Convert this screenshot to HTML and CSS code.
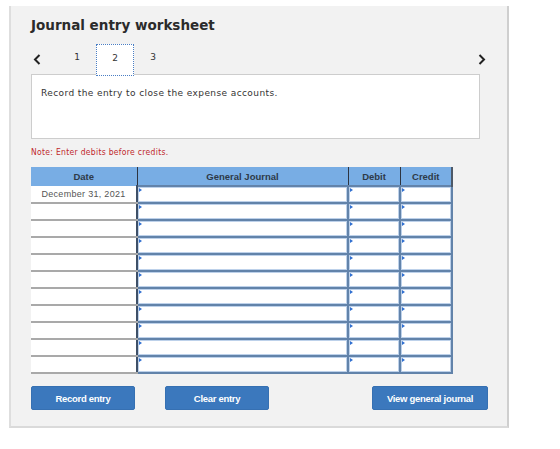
FILE: index.html
```html
<!DOCTYPE html>
<html>
<head>
    <meta charset="utf-8" />
    <title>Journal entry worksheet</title>
    <link rel="stylesheet" href="styles.css">
</head>
<body>

    <div class="panel">
        <h1 class="title">Journal entry worksheet</h1>

        <div class="nav">
            <span class="arrow">
                <svg width="8" height="11" viewBox="0 0 8 11"><path d="M6.5 1 L2 5.5 L6.5 10" fill="none" stroke="#222" stroke-width="2"/></svg>
            </span>
            <span class="tab">1</span>
            <span class="tab active">2</span>
            <span class="tab">3</span>
            <span class="arrow next">
                <svg width="8" height="11" viewBox="0 0 8 11"><path d="M1.5 1 L6 5.5 L1.5 10" fill="none" stroke="#222" stroke-width="2"/></svg>
            </span>
        </div>

        <div class="task">Record the entry to close the expense accounts.</div>

        <div class="note">Note: Enter debits before credits.</div>

        <table class="journal">
            <colgroup>
                <col class="c-date" />
                <col class="c-gj" />
                <col class="c-amt" />
                <col class="c-amt" />
            </colgroup>
            <thead>
                <tr>
                    <th>Date</th>
                    <th>General Journal</th>
                    <th>Debit</th>
                    <th>Credit</th>
                </tr>
            </thead>
            <tbody id="rows">
            </tbody>
        </table>

        <div class="buttons">
            <button class="btn">Record entry</button>
            <button class="btn clear">Clear entry</button>
            <button class="btn view">View general journal</button>
        </div>
    </div>

    <script>
        var rows = document.getElementById("rows");
        //11行空白分錄
        for (var i = 0; i < 11; i++) {
            var tr = document.createElement("tr");
            var d = document.createElement("td");
            d.className = "date";
            d.innerText = i == 0 ? "December 31, 2021" : "";
            tr.appendChild(d);
            for (var j = 0; j < 3; j++) {
                var td = document.createElement("td");
                td.className = "cell";
                tr.appendChild(td);
            }
            rows.appendChild(tr);
        }
    </script>
</body>
</html>
```

FILE: styles.css
```css
body {
    margin: 0;
    background-color: white;
}

.panel {
    margin: 6px 0 0 9px;
    width: 449px;
    height: 411px;
    padding: 9px 27px 0 20px;
    background-color: #f2f2f2;
    border-left: 2px solid #dedede;
    border-right: 2px solid #cfcfcf;
    border-bottom: 2px solid #dadada;
}

.title {
    margin: 0;
    font-family: "DejaVu Sans", Verdana, sans-serif;
    font-size: 13.5px;
    line-height: 20px;
    color: #2b2b2b;
}

.nav {
    display: flex;
    align-items: flex-start;
    margin: 9px -8px 0 0;
    height: 30px;
}

.arrow {
    width: 27px;
    padding: 7px 0 0 2px;
    box-sizing: border-box;
}
.arrow.next {
    margin-left: auto;
    width: 12px;
}

.tab {
    width: 38px;
    height: 32px;
    box-sizing: border-box;
    padding-top: 6px;
    line-height: 14px;
    text-align: center;
    font-family: "DejaVu Sans", Verdana, sans-serif;
    font-size: 9px;
    color: #333;
}
.tab.active {
    position: relative;
    z-index: 1;
    background-color: white;
    border: 1px dotted #4a7ec4;
}

.task {
    height: 39px;
    padding: 12px 9px;
    background-color: white;
    border: 1px solid #cdcdcd;
    font-family: "DejaVu Sans", Verdana, sans-serif;
    font-size: 9px;
    letter-spacing: 0.4px;
    line-height: 12px;
    color: #333;
}

.note {
    margin-top: 7px;
    font-family: "DejaVu Sans Condensed", Tahoma, sans-serif;
    font-size: 8.5px;
    letter-spacing: 0.3px;
    line-height: 12px;
    color: #c0282d;
}

.journal {
    margin-top: 9px;
    width: 421px;
    table-layout: fixed;
    border-collapse: collapse;
    font-family: "Liberation Sans", Arial, sans-serif;
    font-size: 9px;
}
.c-date { width: 106px; }
.c-gj { width: 211px; }
.c-amt { width: 52px; }

.journal th {
    height: 18px;
    padding: 0;
    background-color: #78ade4;
    color: #2e3a48;
    font-size: 9.5px;
    font-weight: bold;
    border-right: 1px solid #2d3440;
}
.journal th:last-child {
    border-right: 2px solid #4d5968;
}

.journal td {
    height: 15px;
    padding: 0;
}

.journal td.date {
    background-color: white;
    border-bottom: 2px solid #a9a9a9;
    text-align: center;
    color: #555;
    letter-spacing: 0.3px;
}

.journal td.cell {
    position: relative;
    background-color: white;
    border: 2px solid #6283aa;
    box-shadow: inset 0 0 0 1px #bdd1ea;
}
.journal td.cell:nth-child(2) {
    border-left-color: #3e5068;
}
.journal td.cell::before {
    content: "";
    position: absolute;
    top: 1px;
    left: 1px;
    border-left: 3px solid #2f6fd0;
    border-top: 2px solid transparent;
    border-bottom: 2px solid transparent;
}

.buttons {
    display: flex;
    margin: 12px -8px 0 0;
}

.btn {
    width: 104px;
    height: 24px;
    padding: 0;
    background-color: #3b78bd;
    border: 1px solid #3670b2;
    border-radius: 2px;
    color: white;
    font-family: "Liberation Sans", Arial, sans-serif;
    font-size: 9.5px;
    font-weight: bold;
    letter-spacing: -0.3px;
}
.btn.clear {
    margin-left: 30px;
}
.btn.view {
    margin-left: auto;
    width: 116px;
}
```
